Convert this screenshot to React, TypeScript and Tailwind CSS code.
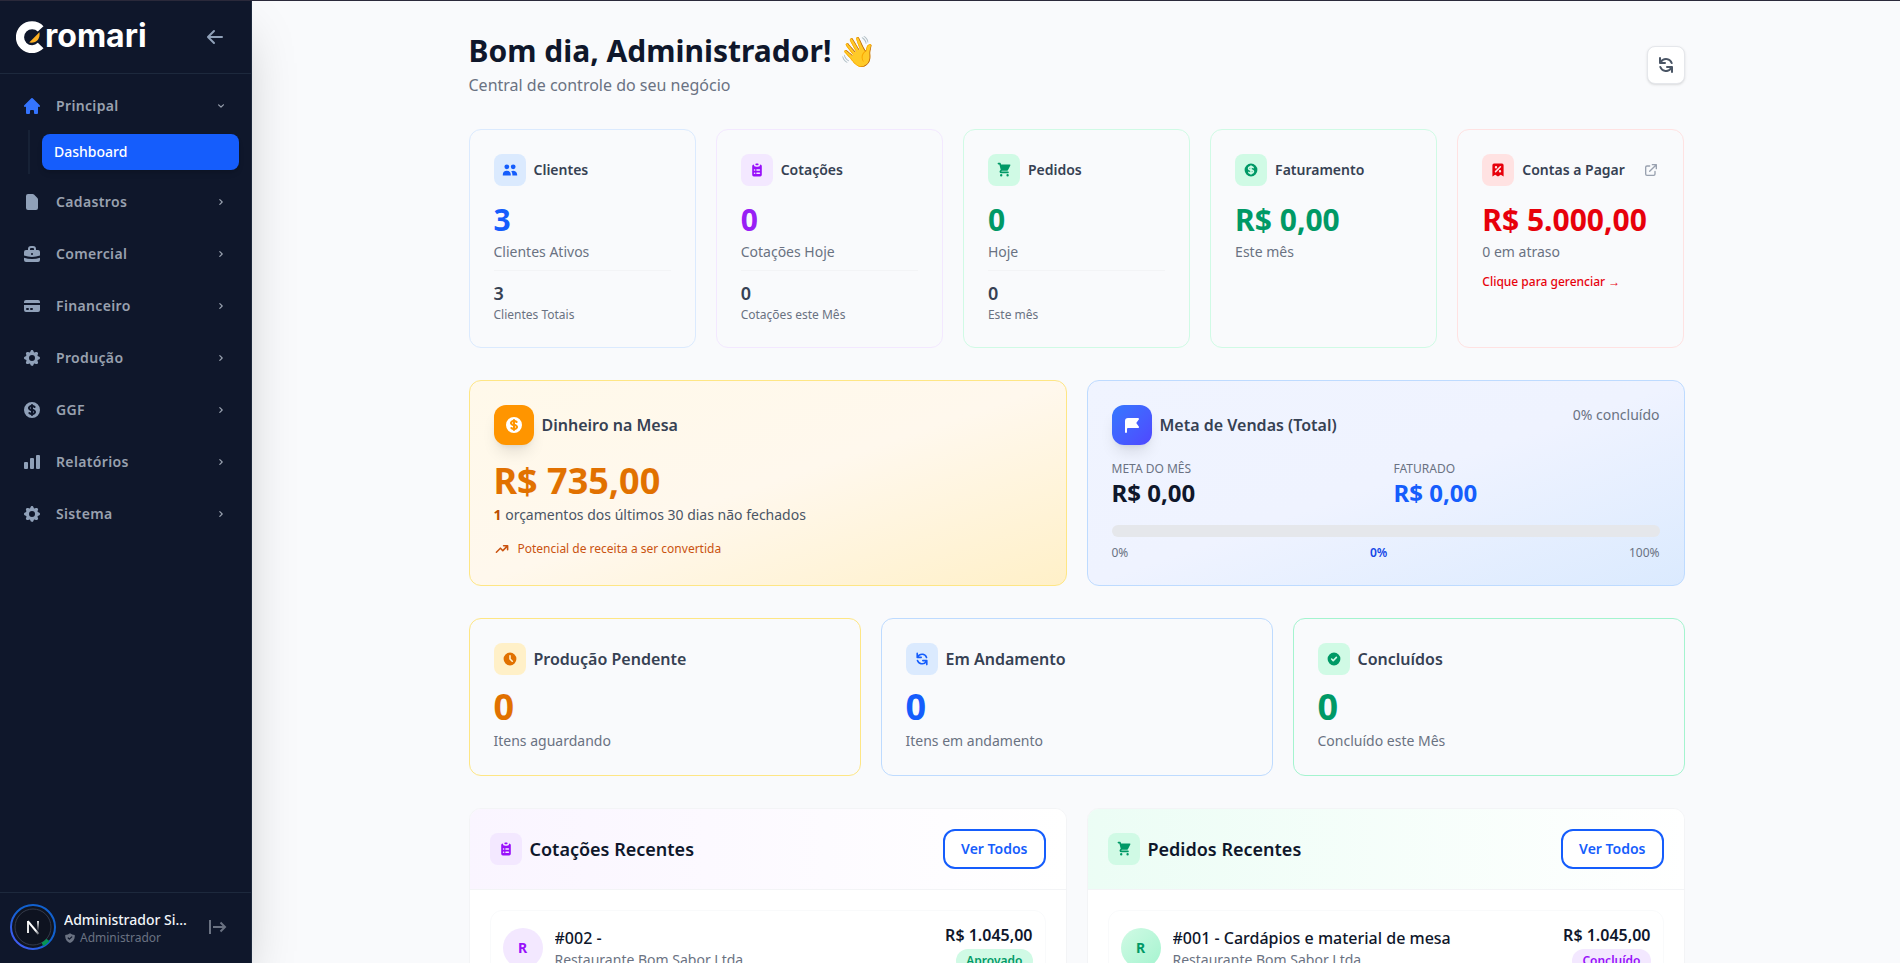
import type { ReactNode } from "react";
import clsx from "clsx";
import {
  HiArrowLeft,
  HiBriefcase,
  HiChartBar,
  HiCheckCircle,
  HiChevronDown,
  HiChevronRight,
  HiClipboardList,
  HiClock,
  HiCog,
  HiCreditCard,
  HiCurrencyDollar,
  HiDocument,
  HiFlag,
  HiHome,
  HiOutlineExternalLink,
  HiReceiptTax,
  HiRefresh,
  HiShieldCheck,
  HiShoppingCart,
  HiTrendingUp,
  HiUsers,
} from "react-icons/hi";

const sections = [
  { label: "Cadastros", icon: HiDocument },
  { label: "Comercial", icon: HiBriefcase },
  { label: "Financeiro", icon: HiCreditCard },
  { label: "Produção", icon: HiCog },
  { label: "GGF", icon: HiCurrencyDollar },
  { label: "Relatórios", icon: HiChartBar },
  { label: "Sistema", icon: HiCog },
];

function Logo() {
  return (
    <a href="#" aria-label="Cromari" className="flex items-center">
      <svg viewBox="0 0 28 32" className="w-7 h-8" aria-hidden="true">
        <path
          d="M27.5 5.2A16 16 0 1 0 27.5 27.2L21.8 21.8A8 8 0 1 1 21.8 10.6Z"
          fill="#fff"
        />
        <path d="M23.4 11.2C24.6 17.5 20.5 22.6 13.2 21.6Z" fill="#fdb022" />
      </svg>
      <span className="pl-px pb-0.5 font-[Inter,sans-serif] text-[32px] leading-7 font-bold text-white">
        romari
      </span>
    </a>
  );
}

function Avatar() {
  return (
    <svg viewBox="0 0 46 46" className="size-[46px] shrink-0" aria-hidden="true">
      <defs>
        <linearGradient id="ring" x1="1" y1="0" x2="0" y2="1">
          <stop offset="0.5" stopColor="#1161d0" />
          <stop offset="1" stopColor="#4f5bff" />
        </linearGradient>
        <linearGradient id="stem" gradientUnits="userSpaceOnUse" x1="28" y1="17" x2="28" y2="27">
          <stop offset="0" stopColor="#fff" />
          <stop offset="1" stopColor="#fff" stopOpacity="0" />
        </linearGradient>
        <linearGradient id="diagonal" gradientUnits="userSpaceOnUse" x1="18" y1="17" x2="29" y2="30">
          <stop offset="0.7" stopColor="#fff" />
          <stop offset="1" stopColor="#fff" stopOpacity="0.3" />
        </linearGradient>
      </defs>
      <circle cx="23" cy="23" r="22" fill="#10141f" stroke="url(#ring)" strokeWidth="2" />
      <circle cx="23" cy="23" r="18" fill="#0e1320" stroke="#343b4b" />
      <path d="M18 29V17" stroke="#fff" strokeWidth="1.8" />
      <path d="M17.8 17.2 28.5 30" stroke="url(#diagonal)" strokeWidth="2" />
      <path d="M28 17v10" stroke="url(#stem)" strokeWidth="1.8" />
      <path d="M32.5 40.5a20 20 0 0 0 5.5-4.5" fill="none" stroke="#079455" strokeWidth="4" />
    </svg>
  );
}

function Sidebar() {
  return (
    <aside className="relative z-10 w-[252px] shrink-0 flex flex-col bg-[#0f172b] border-r border-slate-800 shadow-2xl">
      <div className="flex items-center justify-between h-[73px] pl-4 pr-[26px] border-b border-slate-800">
        <Logo />
        <button aria-label="Recolher menu" className="text-slate-400">
          <HiArrowLeft className="size-5" />
        </button>
      </div>

      <nav className="flex-1 p-2 space-y-1">
        <div>
          <button className="flex items-center gap-3 w-full h-12 px-3 text-sm font-semibold tracking-wide text-gray-400">
            <span className="flex justify-center w-6">
              <HiHome className="size-5 text-[#3474ff]" />
            </span>
            <span className="flex-1 text-left">Principal</span>
            <span className="flex justify-center w-5">
              <HiChevronDown className="size-3" />
            </span>
          </button>
          <div className="ml-5 mr-1 pl-3 py-1 border-l-2 border-slate-800/60">
            <a
              href="#"
              className="flex items-center h-9 px-3 rounded-lg bg-[#155dfc] text-sm font-medium text-white shadow-md"
            >
              Dashboard
            </a>
          </div>
        </div>
        {sections.map(({ label, icon: Icon }) => (
          <button
            key={label}
            className="flex items-center gap-3 w-full h-12 px-3 text-sm font-semibold tracking-wide text-gray-400"
          >
            <span className="flex justify-center w-6">
              <Icon className="size-5 text-slate-400" />
            </span>
            <span className="flex-1 text-left">{label}</span>
            <span className="flex justify-center w-5">
              <HiChevronRight className="size-3" />
            </span>
          </button>
        ))}
      </nav>

      <div className="flex items-center gap-2 h-[71px] pl-2.5 pr-6 pb-0.5 border-t border-slate-800">
        <Avatar />
        <div className="flex-1 min-w-0 pt-0.5">
          <p className="text-sm leading-5 font-medium text-slate-100 truncate">Administrador Sistema</p>
          <p className="flex items-center gap-1 text-xs leading-4 text-gray-500">
            <HiShieldCheck className="size-3" />
            Administrador
          </p>
        </div>
        <button aria-label="Sair" className="ml-3 text-gray-500">
          <svg viewBox="0 0 20 20" className="size-5" fill="none" stroke="currentColor" strokeWidth="2">
            <path d="M3 3v14M6 10h12M13.5 5.5 18 10l-4.500 4.500" />
          </svg>
        </button>
      </div>
    </aside>
  );
}

type IconBoxProps = { className: string; children: ReactNode };

function IconBox({ className, children }: IconBoxProps) {
  return (
    <div className={clsx("size-8 shrink-0 rounded-lg flex items-center justify-center", className)}>
      {children}
    </div>
  );
}

type StatCardProps = {
  title: string;
  icon: ReactNode;
  border: string;
  iconStyle: string;
  valueStyle: string;
  value: string;
  label: string;
  total?: string;
  totalLabel?: string;
  action?: string;
};

function StatCard({
  title,
  icon,
  border,
  iconStyle,
  valueStyle,
  value,
  label,
  total,
  totalLabel,
  action,
}: StatCardProps) {
  return (
    <div className={clsx("rounded-xl border p-6", border)}>
      <div className="flex items-center gap-2 mb-4">
        <IconBox className={iconStyle}>{icon}</IconBox>
        <h3 className="flex-1 text-sm font-semibold text-gray-700 whitespace-nowrap">{title}</h3>
        {action && <HiOutlineExternalLink className="size-4 shrink-0 text-gray-400" />}
      </div>
      <p className={clsx("text-3xl font-bold whitespace-nowrap", valueStyle)}>{value}</p>
      <p className="mt-1 text-sm text-gray-500">{label}</p>
      {total && (
        <div className="mt-2 pt-2 border-t border-gray-100">
          <p className="text-lg font-semibold text-gray-700">{total}</p>
          <p className="text-xs text-gray-500">{totalLabel}</p>
        </div>
      )}
      {action && (
        <a href="#" className="block mt-3 text-xs font-medium text-red-600">
          {action}
        </a>
      )}
    </div>
  );
}

type ProductionCardProps = {
  title: string;
  icon: ReactNode;
  border: string;
  iconStyle: string;
  valueStyle: string;
  label: string;
};

function ProductionCard({ title, icon, border, iconStyle, valueStyle, label }: ProductionCardProps) {
  return (
    <div className={clsx("rounded-xl border p-6", border)}>
      <div className="flex items-center gap-2 mb-3">
        <IconBox className={iconStyle}>{icon}</IconBox>
        <h3 className="font-semibold text-gray-700">{title}</h3>
      </div>
      <p className={clsx("text-4xl font-bold", valueStyle)}>0</p>
      <p className="mt-1 text-sm text-gray-500">{label}</p>
    </div>
  );
}

type RecentCardProps = {
  title: string;
  icon: ReactNode;
  headerStyle: string;
  iconStyle: string;
  avatarStyle: string;
  badgeStyle: string;
  name: string;
  status: string;
};

function RecentCard({
  title,
  icon,
  headerStyle,
  iconStyle,
  avatarStyle,
  badgeStyle,
  name,
  status,
}: RecentCardProps) {
  return (
    <div className="rounded-xl border border-gray-100 bg-white overflow-hidden">
      <div className={clsx("flex items-center justify-between p-5 border-b border-gray-100", headerStyle)}>
        <div className="flex items-center gap-2">
          <IconBox className={iconStyle}>{icon}</IconBox>
          <h3 className="text-lg font-semibold text-slate-900">{title}</h3>
        </div>
        <button className="h-10 px-4 rounded-xl border-2 border-[#155dfc] bg-white text-sm font-semibold text-[#155dfc]">
          Ver Todos
        </button>
      </div>
      <div className="p-5">
        <div className="flex items-center gap-3 p-3 rounded-xl border border-gray-50">
          <div
            className={clsx("size-10 shrink-0 rounded-full flex items-center justify-center text-sm font-bold", avatarStyle)}
          >
            R
          </div>
          <div className="flex-1 min-w-0">
            <p className="font-medium text-slate-900 truncate">{name}</p>
            <p className="text-sm text-gray-500 truncate">Restaurante Bom Sabor Ltda</p>
          </div>
          <div className="flex flex-col items-end gap-0.5">
            <p className="font-semibold text-slate-900">R$ 1.045,00</p>
            <span className={clsx("px-2.5 py-1 rounded-full text-xs font-semibold", badgeStyle)}>{status}</span>
          </div>
        </div>
      </div>
    </div>
  );
}

export default function App() {
  return (
    <div className="flex flex-col h-screen overflow-hidden bg-[#f9fafc] font-['Noto_Sans',sans-serif]">
      <div className="h-px shrink-0 bg-[#2b2a3b]" />
      <div className="flex flex-1 min-h-0">
        <Sidebar />

        <main className="flex-1 min-w-0 pl-px overflow-hidden">
          <div className="max-w-7xl mx-auto p-8 space-y-8">
            <header className="flex items-center justify-between">
              <div>
                <h1 className="text-3xl font-bold text-slate-900">Bom dia, Administrador! 👋</h1>
                <p className="mt-1 text-gray-500">Central de controle do seu negócio</p>
              </div>
              <button
                aria-label="Atualizar"
                className="p-2 rounded-lg border border-gray-200 bg-white text-gray-600 shadow-sm"
              >
                <HiRefresh className="size-5" />
              </button>
            </header>

            <section className="grid grid-cols-5 gap-5">
              <StatCard
                title="Clientes"
                icon={<HiUsers className="size-4" />}
                border="border-blue-100"
                iconStyle="bg-blue-100 text-blue-600"
                valueStyle="text-blue-600"
                value="3"
                label="Clientes Ativos"
                total="3"
                totalLabel="Clientes Totais"
              />
              <StatCard
                title="Cotações"
                icon={<HiClipboardList className="size-4" />}
                border="border-purple-100"
                iconStyle="bg-purple-100 text-purple-600"
                valueStyle="text-[#9820f5]"
                value="0"
                label="Cotações Hoje"
                total="0"
                totalLabel="Cotações este Mês"
              />
              <StatCard
                title="Pedidos"
                icon={<HiShoppingCart className="size-4" />}
                border="border-emerald-100"
                iconStyle="bg-emerald-100 text-emerald-600"
                valueStyle="text-emerald-600"
                value="0"
                label="Hoje"
                total="0"
                totalLabel="Este mês"
              />
              <StatCard
                title="Faturamento"
                icon={<HiCurrencyDollar className="size-4" />}
                border="border-emerald-100"
                iconStyle="bg-emerald-100 text-emerald-600"
                valueStyle="text-emerald-600"
                value="R$ 0,00"
                label="Este mês"
              />
              <StatCard
                title="Contas a Pagar"
                icon={<HiReceiptTax className="size-4" />}
                border="border-red-100"
                iconStyle="bg-red-100 text-red-600"
                valueStyle="text-red-600"
                value="R$ 5.000,00"
                label="0 em atraso"
                action="Clique para gerenciar →"
              />
            </section>

            <section className="grid grid-cols-2 gap-5">
              <div className="rounded-xl border border-amber-200 p-6 bg-linear-to-br from-[#fff9ea] via-[#fff8ed] to-[#fff0c8]">
                <div className="flex items-center gap-2 mb-4">
                  <div className="size-10 rounded-xl flex items-center justify-center text-white bg-[#ff9500] shadow-lg">
                    <HiCurrencyDollar className="size-5" />
                  </div>
                  <h3 className="font-semibold text-gray-700">Dinheiro na Mesa</h3>
                </div>
                <p className="text-4xl font-bold text-amber-600">R$ 735,00</p>
                <p className="mt-1 text-sm text-gray-600">
                  <span className="font-bold text-amber-700">1</span> orçamentos dos últimos 30 dias não fechados
                </p>
                <p className="flex items-center gap-2 mt-4 text-xs text-[#ca5310]">
                  <HiTrendingUp className="size-4" />
                  Potencial de receita a ser convertida
                </p>
              </div>

              <div className="rounded-xl border border-blue-200 p-6 bg-linear-to-br from-[#f0f4ff] via-[#eff3ff] to-blue-100">
                <div className="flex items-start justify-between mb-4">
                  <div className="flex items-center gap-2">
                    <div className="size-10 rounded-xl flex items-center justify-center text-white bg-linear-to-br from-[#3377ff] to-[#4f46ff] shadow-lg">
                      <HiFlag className="size-5" />
                    </div>
                    <h3 className="font-semibold text-gray-700">Meta de Vendas (Total)</h3>
                  </div>
                  <span className="text-sm text-gray-500">0% concluído</span>
                </div>
                <div className="grid grid-cols-2 gap-4 mb-4">
                  <div>
                    <p className="text-xs text-gray-500">META DO MÊS</p>
                    <p className="text-2xl font-bold text-slate-900">R$ 0,00</p>
                  </div>
                  <div>
                    <p className="text-xs text-gray-500">FATURADO</p>
                    <p className="text-2xl font-bold text-blue-600">R$ 0,00</p>
                  </div>
                </div>
                <div className="h-3 rounded-full bg-gray-200" />
                <div className="flex justify-between mt-2 text-xs text-gray-500">
                  <span>0%</span>
                  <span className="font-semibold text-blue-700">0%</span>
                  <span>100%</span>
                </div>
              </div>
            </section>

            <section className="grid grid-cols-3 gap-5">
              <ProductionCard
                title="Produção Pendente"
                icon={<HiClock className="size-4" />}
                border="border-amber-200"
                iconStyle="bg-[#fff0c8] text-amber-600"
                valueStyle="text-amber-600"
                label="Itens aguardando"
              />
              <ProductionCard
                title="Em Andamento"
                icon={<HiRefresh className="size-4" />}
                border="border-blue-200"
                iconStyle="bg-blue-100 text-blue-600"
                valueStyle="text-blue-600"
                label="Itens em andamento"
              />
              <ProductionCard
                title="Concluídos"
                icon={<HiCheckCircle className="size-4" />}
                border="border-emerald-200"
                iconStyle="bg-emerald-100 text-emerald-600"
                valueStyle="text-emerald-600"
                label="Concluído este Mês"
              />
            </section>

            <section className="grid grid-cols-2 gap-5">
              <RecentCard
                title="Cotações Recentes"
                icon={<HiClipboardList className="size-4" />}
                headerStyle="bg-linear-to-r from-purple-50 to-white"
                iconStyle="bg-purple-100 text-purple-600"
                avatarStyle="bg-purple-100 text-purple-600"
                badgeStyle="bg-emerald-100 text-emerald-600"
                name="#002 -"
                status="Aprovado"
              />
              <RecentCard
                title="Pedidos Recentes"
                icon={<HiShoppingCart className="size-4" />}
                headerStyle="bg-linear-to-r from-emerald-50 to-white"
                iconStyle="bg-emerald-100 text-emerald-600"
                avatarStyle="bg-linear-to-br from-emerald-100 to-emerald-200 text-emerald-600"
                badgeStyle="bg-purple-100 text-purple-600"
                name="#001 - Cardápios e material de mesa"
                status="Concluído"
              />
            </section>
          </div>
        </main>
      </div>
    </div>
  );
}
